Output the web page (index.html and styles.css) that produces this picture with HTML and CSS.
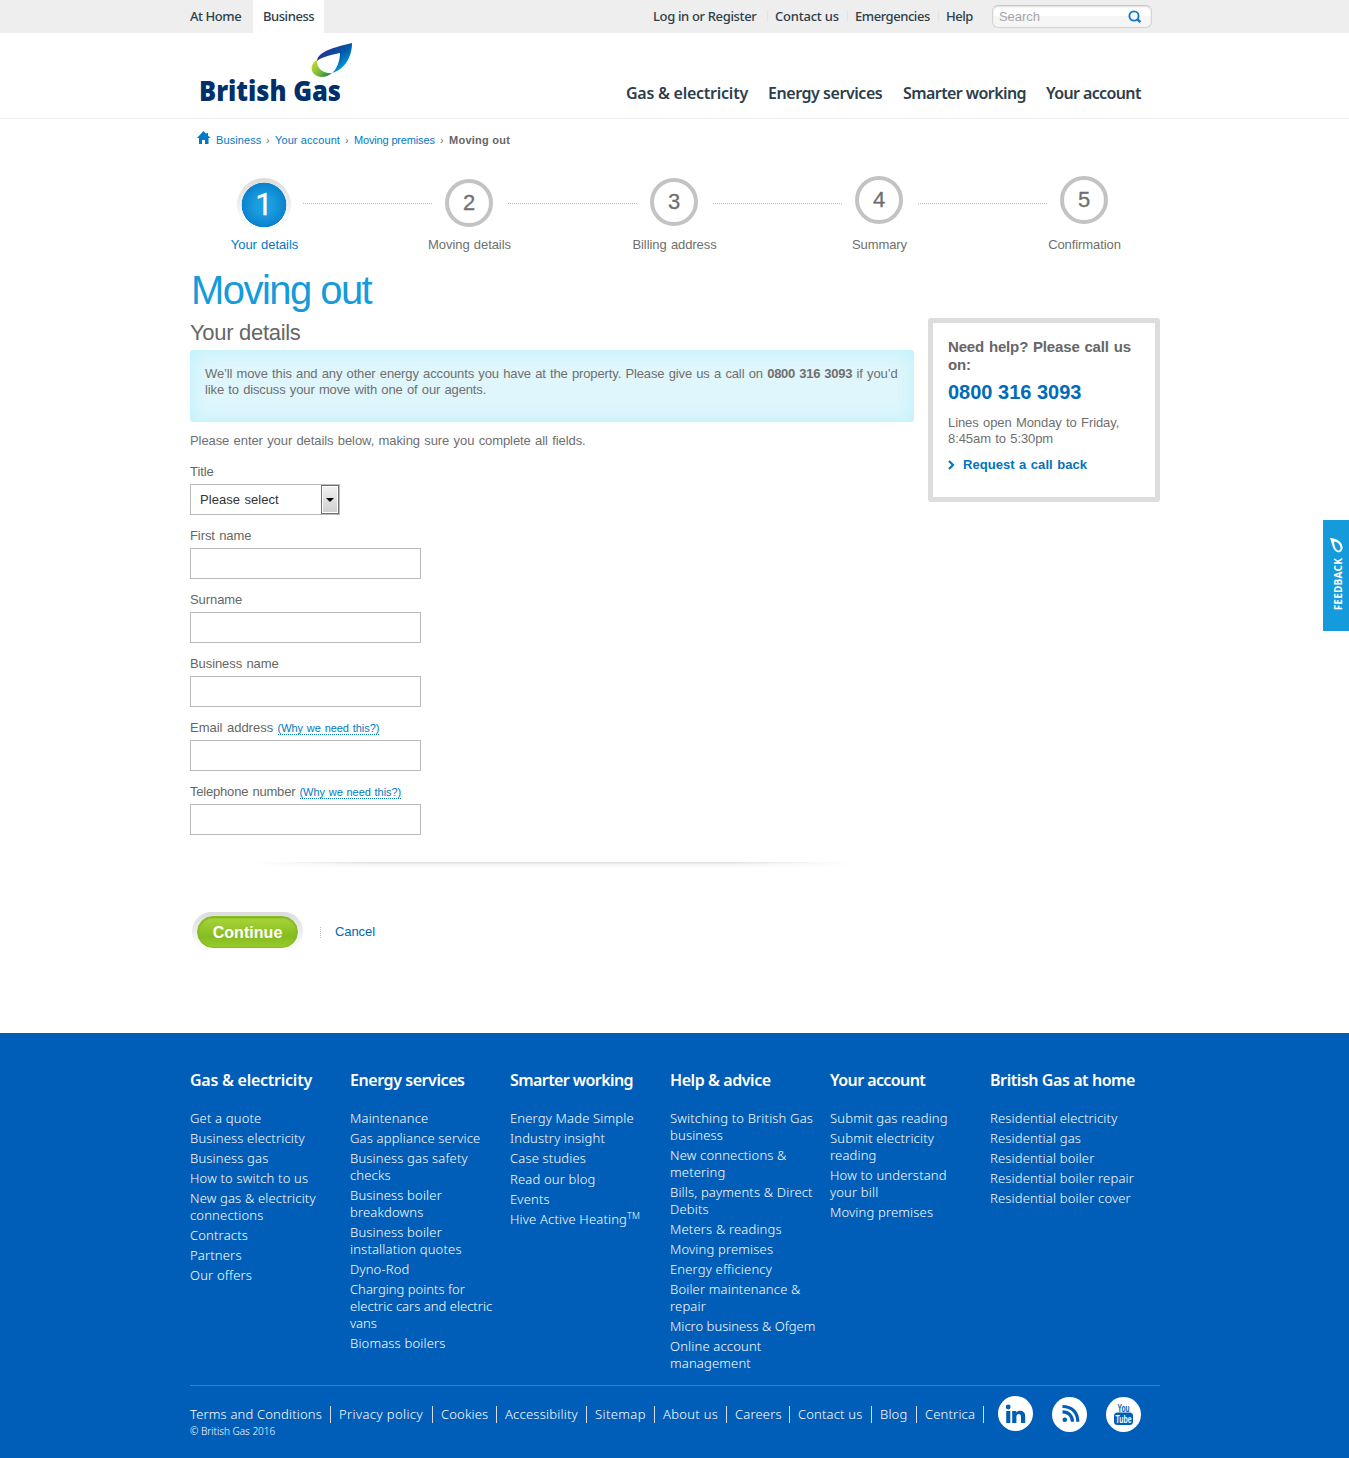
FILE: index.html
```html
<!DOCTYPE html>
<html lang="en">
<head>
<meta charset="utf-8">
<title>Moving out - British Gas Business</title>
<link rel="stylesheet" href="styles.css">
</head>
<body>
<div class="topbar">
  <div class="wrap topbar-row">
    <a class="tab">At Home</a>
    <a class="tab tab-active">Business</a>
    <nav class="util">
      <a class="u-login">Log in or Register</a>
      <a class="u-contact">Contact us</a>
      <a class="u-emerg">Emergencies</a>
      <a class="u-help">Help</a>
    </nav>
    <div class="search">
      <span>Search</span>
      <svg width="14" height="14" viewBox="0 0 14 14"><circle cx="6" cy="6" r="4.600" fill="none" stroke="#0f7dc4" stroke-width="1.9"/><path d="M9 9l3.400 3.200" stroke="#0f7dc4" stroke-width="2.5"/></svg>
    </div>
  </div>
</div>
<header class="header">
  <div class="wrap header-row">
    <svg class="logo" width="156" height="72" viewBox="0 0 156 72">
      <defs>
        <linearGradient id="blue" x1="0.1" y1="0.3" x2="0.75" y2="1"><stop offset="0" stop-color="#2b2f8f"/><stop offset=".45" stop-color="#0058a8"/><stop offset="1" stop-color="#00aeef"/></linearGradient>
        <linearGradient id="green" x1="0" y1="0.2" x2="1" y2="0.9"><stop offset="0" stop-color="#c5d92d"/><stop offset=".5" stop-color="#7dba3c"/><stop offset="1" stop-color="#00803c"/></linearGradient>
      </defs>
      <path fill="url(#green)" d="M117 18C111 21 110 28 114 32C119 37 128 35 132 31C125 32 116 27 117 18Z"/>
      <path fill="url(#blue)" d="M152 1C136 5 118 9 117 19C122 15 131 13 140 11C140 20 136 28 132 31C143 28 152 17 152 1Z"/>
      <text class="logo-text" x="-1" y="59" textLength="142" lengthAdjust="spacingAndGlyphs">British Gas</text>
    </svg>
    <nav class="mainnav">
      <a class="n1">Gas &amp; electricity</a>
      <a class="n2">Energy services</a>
      <a class="n3">Smarter working</a>
      <a class="n4">Your account</a>
    </nav>
  </div>
</header>
<main class="wrap main">
  <div class="crumbs">
    <svg width="14" height="13" viewBox="0 0 14 13"><path fill="#0079c8" d="M6.500 0L0 7H2V13H5V9H8V13H11.500V7H13.500L11 4.500V2H9.500V3Z"/></svg>
    <a class="c1">Business</a><i>›</i><a class="c2">Your account</a><i>›</i><a class="c3">Moving premises</a><i>›</i><b>Moving out</b>
  </div>
  <div class="steps">
    <div class="step"><span class="dot dot-active">1</span></div><div class="dash"></div>
    <div class="step"><span class="dot dot-2">2</span></div><div class="dash"></div>
    <div class="step"><span class="dot dot-3">3</span></div><div class="dash"></div>
    <div class="step"><span class="dot">4</span></div><div class="dash"></div>
    <div class="step"><span class="dot">5</span></div>
  </div>
  <div class="step-labels"><span class="on">Your details</span><span>Moving details</span><span>Billing address</span><span>Summary</span><span>Confirmation</span></div>
  <h1>Moving out</h1>
  <div class="cols">
    <form class="form">
      <h2>Your details</h2>
      <div class="notice">We’ll move this and any other energy accounts you have at the property. Please give us a call on <b>0800 316 3093</b> if you’d<br>like to discuss your move with one of our agents.</div>
      <p class="intro">Please enter your details below, making sure you complete all fields.</p>
      <div class="field"><label>Title</label><div class="select"><span>Please select</span><span class="drop"></span></div></div>
      <div class="field"><label>First name</label><input type="text"></div>
      <div class="field"><label>Surname</label><input type="text"></div>
      <div class="field"><label>Business name</label><input type="text"></div>
      <div class="field"><label class="email">Email address <a class="why">(Why we need this?)</a></label><input type="text"></div>
      <div class="field"><label class="tel">Telephone number <a class="why">(Why we need this?)</a></label><input type="text"></div>
      <div class="shade"></div>
      <div class="actions"><span class="ring"><button type="button">Continue</button></span><a class="cancel">Cancel</a></div>
    </form>
    <aside class="help">
      <h3>Need help? Please call us<br>on:</h3>
      <p class="phone">0800 316 3093</p>
      <p class="lines">Lines open Monday to Friday,<br>8:45am to 5:30pm</p>
      <a class="callback"><svg width="7" height="10" viewBox="0 0 7 10"><path d="M1 1l4 4-4 4" fill="none" stroke="#0079c1" stroke-width="2.200"/></svg>Request a call back</a>
    </aside>
  </div>
</main>
<footer class="footer">
  <div class="wrap">
    <div class="fcols">
      <section><h4 class="h-gas">Gas &amp; electricity</h4><ul><li>Get a quote</li><li>Business electricity</li><li>Business gas</li><li>How to switch to us</li><li>New gas &amp; electricity<br>connections</li><li>Contracts</li><li>Partners</li><li>Our offers</li></ul></section>
      <section><h4>Energy services</h4><ul><li>Maintenance</li><li>Gas appliance service</li><li>Business gas safety<br>checks</li><li>Business boiler<br>breakdowns</li><li>Business boiler<br>installation quotes</li><li>Dyno-Rod</li><li class="tight">Charging points for<br>electric cars and electric<br>vans</li><li>Biomass boilers</li></ul></section>
      <section><h4 class="h-narrow">Smarter working</h4><ul><li>Energy Made Simple</li><li>Industry insight</li><li>Case studies</li><li class="drop-1">Read our blog</li><li>Events</li><li>Hive Active Heating<sup>TM</sup></li></ul></section>
      <section><h4>Help &amp; advice</h4><ul><li>Switching to British Gas<br>business</li><li>New connections &amp;<br>metering</li><li>Bills, payments &amp; Direct<br>Debits</li><li>Meters &amp; readings</li><li>Moving premises</li><li>Energy efficiency</li><li>Boiler maintenance &amp;<br>repair</li><li class="tight">Micro business &amp; Ofgem</li><li>Online account<br>management</li></ul></section>
      <section><h4 class="h-narrow">Your account</h4><ul><li>Submit gas reading</li><li>Submit electricity<br>reading</li><li>How to understand<br>your bill</li><li>Moving premises</li></ul></section>
      <section><h4>British Gas at home</h4><ul><li>Residential electricity</li><li>Residential gas</li><li>Residential boiler</li><li>Residential boiler repair</li><li>Residential boiler cover</li></ul></section>
    </div>
    <div class="fbottom">
      <div>
        <div class="legal"><a>Terms and Conditions</a><a>Privacy policy</a><a>Cookies</a><a>Accessibility</a><a>Sitemap</a><a>About us</a><a>Careers</a><a>Contact us</a><a>Blog</a><a>Centrica</a></div>
        <p class="copy">© British Gas 2016</p>
      </div>
      <div class="social">
        <svg class="in" width="35" height="35" viewBox="0 0 35 35"><circle cx="17.500" cy="17.500" r="17.500" fill="#fff"/><g fill="#005eb8"><circle cx="10.200" cy="11" r="2.400"/><path d="M8.200 15h4.100v12H8.200zM14.200 15h4v1.500c2.200-2.800 9-2.500 9 3.500v7h-4.200v-6.300c0-3.600-4.600-3.400-4.600 0V27h-4.200z"/></g></svg>
        <svg width="35" height="35" viewBox="0 0 35 35"><circle cx="17.500" cy="17.500" r="17.500" fill="#fff"/><circle cx="12.800" cy="22.700" r="2.300" fill="#005eb8"/><path d="M10.500 14.800c6 0 10 4 10 10M10.500 9.500c9.500 0 15.300 6 15.300 15.300" fill="none" stroke="#005eb8" stroke-width="3.200"/></svg>
        <svg width="35" height="35" viewBox="0 0 35 35"><circle cx="17.500" cy="17.500" r="17.500" fill="#fff"/><rect x="8" y="15.500" width="19" height="12.500" rx="3.500" fill="#005eb8"/><text class="yt" x="11.500" y="14.500" textLength="12" lengthAdjust="spacingAndGlyphs">You</text><text class="yt yt-w" x="9.500" y="26" textLength="16" lengthAdjust="spacingAndGlyphs">Tube</text></svg>
      </div>
    </div>
  </div>
</footer>
<div class="feedback"><svg width="14" height="15" viewBox="0 0 14 15"><path fill="#fff" fill-rule="evenodd" d="M0 0C6 0 12 3.500 12.500 9C13 13 10 15 7 14C2.500 12 2.500 6 0 0ZM4 3.500C4.500 7 4.500 10.500 8 12.500C10.500 12.500 11 10.500 10.200 8.500C9.500 5.500 7 4 4 3.500Z"/></svg><span>FEEDBACK</span></div>
</body>
</html>
```
FILE: styles.css
```css
* { box-sizing: border-box; margin: 0; padding: 0; }
body { position: relative; width: 1349px; height: 1458px; overflow: hidden; background: #fff; color: #706f6f; font: 13px/16px "Liberation Sans", Arial, sans-serif; letter-spacing: -.08px; word-spacing: .8px; }
.wrap { width: 970px; margin-left: 190px; }
ul { list-style: none; }
a { text-decoration: none; white-space: nowrap; }

.topbar { height: 33px; background: #eee; }
.topbar-row { display: flex; height: 33px; font: 500 13px/33px "Noto Sans", sans-serif; letter-spacing: -.45px; word-spacing: 0; color: #2c3e4c; }
.tab { width: 63px; }
.tab-active { width: 71px; padding-left: 10px; background: #fff; }
.util { display: flex; margin-left: 329px; }
.util a + a { background: linear-gradient(#e2e2e2, #e2e2e2) no-repeat 0 11px / 1px 10px; padding-left: 8px; }
.u-login { width: 114px; letter-spacing: -.35px; }
.util .u-contact { width: 80px; letter-spacing: -.22px; }
.u-emerg { width: 91px; }
.util .u-help { width: 54px; }
.search { display: flex; justify-content: space-between; align-items: center; width: 160px; height: 23px; margin-top: 5px; padding: 0 9px 0 6px; border: 1px solid #d4d4d4; border-top-color: #c8c8c8; border-radius: 6px; background: linear-gradient(#fff 50%, #f6f6f6 50%); box-shadow: inset 0 1px 2px #ddd; color: #a9a4a9; font: 13px/20px "Liberation Sans", sans-serif; letter-spacing: -.05px; }

.header { height: 86px; border-bottom: 1px solid #eee; }
.header-row { display: flex; }
.logo { margin: 9px 0 0 10px; overflow: visible; }
.logo-text { font: 800 28px "Open Sans", sans-serif; fill: #002f6c; letter-spacing: 0; word-spacing: 0; }
.mainnav { display: flex; margin: 50px 0 0 270px; font: 600 16px/20px "Noto Sans", sans-serif; color: #2c3e4c; letter-spacing: -.45px; word-spacing: 0; }
.n1 { width: 142px; letter-spacing: -.25px; }
.n2 { width: 135px; }
.n3 { width: 143px; letter-spacing: -.58px; }
.n4 { letter-spacing: -.62px; }

.crumbs { display: flex; align-items: center; height: 42px; padding-left: 7px; font-size: 11px; letter-spacing: .1px; word-spacing: 0; }
.crumbs svg { margin: -6px 5px 0 0; }
.crumbs a { color: #0079c8; }
.crumbs i { width: 14px; text-align: center; font-style: normal; }
.crumbs b { color: #666; letter-spacing: .25px; }
.c1 { width: 45px; }
.c2 { width: 65px; }
.c3 { width: 81px; letter-spacing: -.16px; }

.steps { display: flex; height: 70px; margin: 8px 0 0 38px; width: 894px; }
.step { display: flex; justify-content: center; flex: 0 0 75px; padding: 7px 3px 0 0; }
.dash { flex: 0 0 130px; height: 1px; margin-top: 34px; background: repeating-linear-gradient(90deg, #bbb 0 1px, #fff 1px 2px); }
.dot { flex: none; width: 48px; height: 48px; border: 4px solid #c3c3c3; border-radius: 50%; text-align: center; font: 22px/39px "Liberation Sans", sans-serif; color: #6f6f6f; -webkit-text-stroke: .3px #6f6f6f; }
.dot-2 { margin-top: 3px; }
.dot-3 { margin-top: 2px; }
.dot-active { width: 54px; height: 54px; margin-top: 2px; padding: 4px 5px; border: 0; background: radial-gradient(circle at 50% 50%, #1a9fe0 0 8px, #0a82cf 22px, transparent 22.600px), linear-gradient(#dcdcdc, #fff 92%); font: 31px/46px Roboto, sans-serif; color: #fff; -webkit-text-stroke: .3px #fff; }
.step-labels { display: grid; grid-template-columns: repeat(5, 205px); width: 1025px; margin: -2px 0 0 -28px; text-align: center; }
.step-labels .on { color: #0079c8; }

h1 { height: 68px; padding: 13px 0 0 1px; font: 400 40px/48px "Liberation Sans", sans-serif; letter-spacing: -1.550px; word-spacing: 0; color: #159bdb; }
.cols { display: flex; gap: 14px; align-items: flex-start; }
.form { width: 724px; }
h2 { height: 29px; font: 400 22px/24px "Liberation Sans", sans-serif; letter-spacing: -.3px; word-spacing: 0; color: #666; }
.notice { height: 72px; padding: 16px 15px; border-radius: 4px; background: #dff6fc; box-shadow: inset 0 0 18px 3px #c2f2fa; white-space: nowrap; letter-spacing: -.13px; }
.notice b { letter-spacing: -.25px; }
.intro { height: 41px; padding-top: 11px; }
.field { height: 64px; }
.field label { display: block; height: 21px; padding-top: 1px; color: #666; }
.field .email { letter-spacing: 0; }
.field .tel { letter-spacing: -.2px; }
.field input { display: block; width: 231px; height: 31px; border: 1px solid #bbb; background: #fff; }
.select { display: flex; justify-content: space-between; width: 150px; height: 31px; padding-left: 9px; border: 1px solid #bbb; color: #333; line-height: 29px; letter-spacing: .05px; }
.drop { width: 18px; height: 29px; border: 1px solid #707070; background: linear-gradient(#f2f2f2, #cfcfcf); box-shadow: inset 0 0 0 1px #fff; display: flex; align-items: center; justify-content: center; }
.drop::after { content: ""; border: 4px solid transparent; border-top-color: #000; border-bottom: 0; }
.why { font-size: 11px; color: #0079c1; border-bottom: 1px dotted #0079c1; letter-spacing: -.05px; line-height: 14px; }
.shade { height: 6px; width: 600px; margin: 15px 0 0 62px; background: linear-gradient(90deg, #fff, transparent 20%, transparent 80%, #fff), linear-gradient(#dedede, #f4f4f4 40%, #fff); }
.actions { display: flex; align-items: center; margin: 44px 0 0 2px; }
.ring { width: 111px; height: 39px; padding: 4px 5px; border-radius: 20px; background: linear-gradient(#dcdcdc, #fff); }
.ring button { display: block; width: 101px; height: 32px; padding-top: 1px; border: 1px solid #86bb22; border-radius: 16px; background: linear-gradient(#a9d63a, #86bb20 65%, #98cc2c); box-shadow: inset 0 1px 2px #75a822; color: #fff; font: 700 16px/29px "Liberation Sans", sans-serif; letter-spacing: .05px; }
.cancel { margin-left: 17px; padding-left: 15px; color: #0067b1; background: repeating-linear-gradient(#bbb 0 1px, #fff 1px 2px) no-repeat 0 3px / 1px 12px; }

.help { width: 232px; height: 184px; margin-top: -3px; padding: 15px 0 0 15px; border: 5px solid #ddd; border-radius: 3px; }
.help h3 { font: 700 15px/18px "Liberation Sans", sans-serif; color: #666; letter-spacing: -.15px; }
.phone { margin-top: 5px; font-size: 20px; line-height: 26px; font-weight: 700; color: #006cb8; letter-spacing: 0; word-spacing: 0; }
.lines { margin: 10px 0; }
.callback { display: flex; align-items: center; gap: 8px; color: #0073bd; font-weight: 700; letter-spacing: .05px; }

.footer { margin-top: 82px; height: 425px; background: #005eb8; color: #fff; font: 300 13px/17px "Noto Sans", sans-serif; letter-spacing: .17px; word-spacing: 0; }
.fcols { display: grid; grid-template-columns: repeat(6, 160px); height: 352px; padding-top: 37px; white-space: nowrap; }
.fcols h4 { height: 40px; font-size: 16px; line-height: 20px; font-weight: 600; letter-spacing: -.43px; }
.fcols .h-gas { letter-spacing: -.25px; }
.fcols .h-narrow { letter-spacing: -.58px; }
.fcols li { margin-bottom: 3px; }
.fcols .tight { letter-spacing: .02px; }
.fcols .drop-1 { margin-top: 4px; }
sup { font-size: 9px; line-height: 0; vertical-align: 5px; }
.fbottom { display: flex; justify-content: space-between; border-top: 1px solid #0091f2; }
.legal { display: flex; margin-top: 20px; }
.legal a { border-right: 1px solid #d8dce0; margin-right: 8px; }
.legal a:nth-child(1) { width: 141px; }
.legal a:nth-child(2) { width: 94px; letter-spacing: .4px; }
.legal a:nth-child(3) { width: 56px; }
.legal a:nth-child(4) { width: 82px; letter-spacing: .22px; }
.legal a:nth-child(5) { width: 60px; letter-spacing: .4px; }
.legal a:nth-child(6) { width: 64px; letter-spacing: .3px; }
.legal a:nth-child(7) { width: 55px; }
.legal a:nth-child(8) { width: 74px; }
.legal a:nth-child(9) { width: 37px; }
.legal a:nth-child(10) { width: 59px; margin-right: 0; }
.copy { font-size: 10px; letter-spacing: 0; }
.social { display: flex; gap: 19px; margin: 11px 19px 0 0; }
.social .in { margin-top: -1px; }
.yt { font: 700 10px "Liberation Sans", sans-serif; fill: #005eb8; letter-spacing: 0; }
.yt-w { font-size: 11px; fill: #fff; }

.feedback { position: absolute; right: 0; top: 520px; width: 26px; height: 111px; padding: 18px 0 0 7px; background: #159bdb; color: #fff; }
.feedback svg { display: block; }
.feedback span { display: block; margin-top: 5px; writing-mode: vertical-rl; transform: rotate(180deg); font: 700 10px/16px "Open Sans", sans-serif; letter-spacing: .2px; }
```
